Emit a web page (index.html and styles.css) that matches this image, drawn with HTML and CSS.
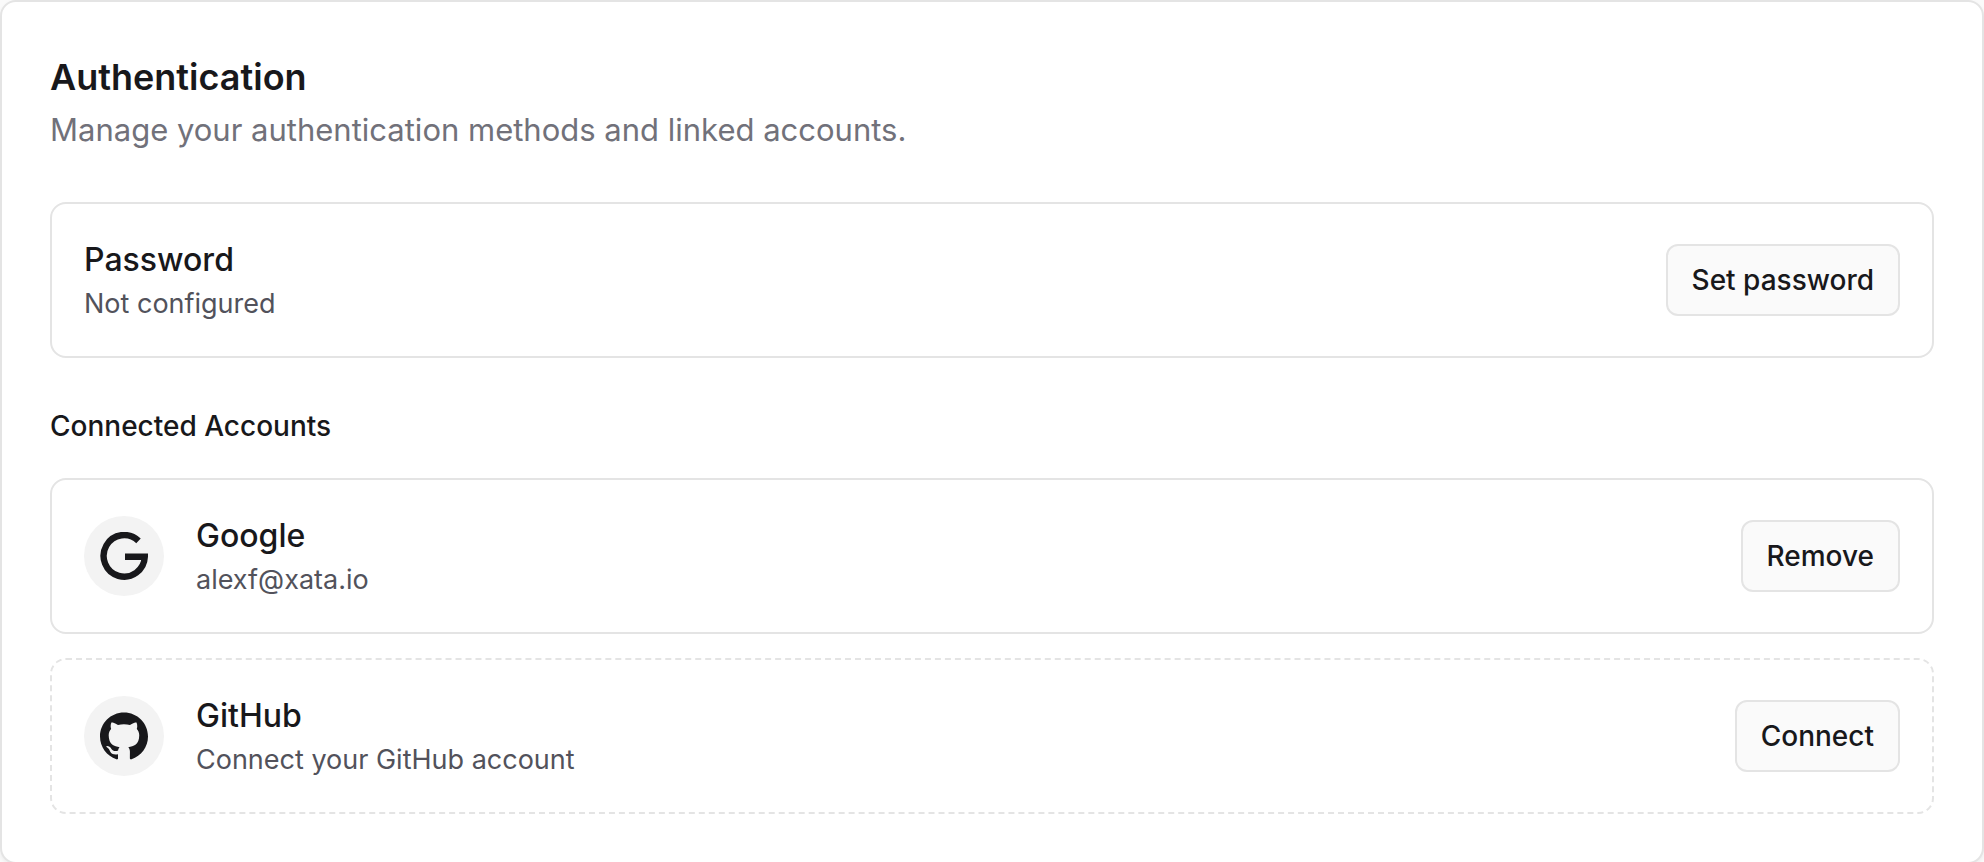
FILE: index.html
```html
<!DOCTYPE html>
<html lang="en">
<head>
  <meta charset="UTF-8">
  <meta name="viewport" content="width=device-width, initial-scale=1.0">
  <title>Authentication</title>
  <link rel="stylesheet" href="styles.css">
</head>
<body>
  <main class="card">
    <header class="card-header">
      <h1>Authentication</h1>
      <p>Manage your authentication methods and linked accounts.</p>
    </header>

    <section class="method">
      <div class="method-text">
        <h3>Password</h3>
        <p>Not configured</p>
      </div>
      <button type="button" class="btn">Set password</button>
    </section>

    <section class="accounts">
      <h2>Connected Accounts</h2>
      <ul class="account-list">
        <li class="method">
          <span class="avatar">
            <svg viewBox="0 0 48 48" aria-hidden="true">
              <path d="M38.5 8.9A20.6 20.8 0 1 0 44.8 24.7H25" fill="none" stroke="currentColor" stroke-width="6.4"/>
            </svg>
          </span>
          <div class="method-text">
            <h3>Google</h3>
            <p>alexf@xata.io</p>
          </div>
          <button type="button" class="btn">Remove</button>
        </li>
        <li class="method method-empty">
          <span class="avatar">
            <svg viewBox="0 0 24 24" aria-hidden="true">
              <path fill="currentColor" d="M12 .297c-6.63 0-12 5.373-12 12 0 5.303 3.438 9.8 8.205 11.385.6.113.82-.258.82-.577 0-.285-.01-1.04-.015-2.04-3.338.724-4.042-1.61-4.042-1.61C4.422 18.07 3.633 17.7 3.633 17.7c-1.087-.744.084-.729.084-.729 1.205.084 1.838 1.236 1.838 1.236 1.07 1.835 2.809 1.305 3.495.998.108-.776.417-1.305.76-1.605-2.665-.3-5.466-1.332-5.466-5.93 0-1.31.465-2.38 1.235-3.22-.135-.303-.54-1.523.105-3.176 0 0 1.005-.322 3.3 1.23.96-.267 1.98-.399 3-.405 1.02.006 2.04.138 3 .405 2.28-1.552 3.285-1.23 3.285-1.23.645 1.653.24 2.873.12 3.176.765.84 1.23 1.91 1.23 3.22 0 4.61-2.805 5.625-5.475 5.92.42.36.81 1.096.81 2.22 0 1.606-.015 2.896-.015 3.286 0 .315.21.69.825.57C20.565 22.092 24 17.592 24 12.297c0-6.627-5.373-12-12-12"/>
            </svg>
          </span>
          <div class="method-text">
            <h3>GitHub</h3>
            <p>Connect your GitHub account</p>
          </div>
          <button type="button" class="btn">Connect</button>
        </li>
      </ul>
    </section>
  </main>
</body>
</html>
```
FILE: styles.css
```css
* {
  box-sizing: border-box;
  margin: 0;
  padding: 0;
}
html {
  overflow: hidden;
}
body {
  font-family: Inter, "Liberation Sans", sans-serif;
  background-color: #fafafa;
  color: #18181b;
}
.card {
  display: flex;
  flex-direction: column;
  gap: 48px;
  padding: 48px;
  background-color: #fff;
  border: 2px solid #e4e4e4;
  border-radius: 16px;
  box-shadow: 0 2px 4px rgba(0, 0, 0, 0.06);
}
.card-header {
  display: flex;
  flex-direction: column;
  gap: 2px;
}
h1 {
  font-size: 36px;
  line-height: 54px;
  font-weight: 600;
}
.card-header p {
  font-size: 31px;
  line-height: 48px;
  color: #71717a;
}
h2 {
  font-size: 28px;
  line-height: 40px;
  font-weight: 500;
}
/* Rows */
.method {
  display: flex;
  align-items: center;
  gap: 32px;
  padding: 32px;
  border: 2px solid #e4e4e4;
  border-radius: 16px;
}
.method-empty {
  border-style: dashed;
}
.method-text {
  flex: 1;
}
h3 {
  font-size: 32px;
  line-height: 48px;
  font-weight: 500;
}
.method-text p {
  font-size: 27px;
  line-height: 40px;
  color: #52525b;
}
.accounts {
  display: flex;
  flex-direction: column;
  gap: 32px;
}
.account-list {
  display: flex;
  flex-direction: column;
  gap: 24px;
  list-style: none;
}
.avatar {
  display: flex;
  align-items: center;
  justify-content: center;
  width: 80px;
  height: 80px;
  border-radius: 50%;
  background-color: #f3f3f3;
}
.avatar svg {
  width: 48px;
  height: 48px;
}
.btn {
  height: 72px;
  padding: 0 24px;
  font: inherit;
  font-size: 28px;
  font-weight: 500;
  color: inherit;
  background-color: #fafafa;
  border: 2px solid #e4e4e4;
  border-radius: 12px;
  cursor: pointer;
}
.btn:hover {
  background-color: #f3f3f3;
}
```
